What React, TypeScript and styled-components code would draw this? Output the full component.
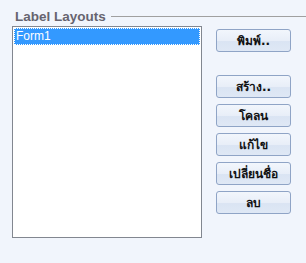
import React from "react";
import styled, { createGlobalStyle } from "styled-components";

const GlobalStyle = createGlobalStyle`
  html, body {
    margin: 0;
    padding: 0;
    background: #f1f5fc;
  }
  body {
    width: 306px;
    height: 263px;
    overflow: hidden;
    font-family: Tahoma, "DejaVu Sans", "Noto Sans", sans-serif;
  }
`;

const Panel = styled.div`
  width: 306px;
  height: 263px;
  box-sizing: border-box;
  padding-top: 6px;
`;

const Header = styled.div`
  display: flex;
  align-items: center;
  height: 20px;
  padding-left: 15px;
  gap: 5px;
`;

const Title = styled.span`
  font-family: "Liberation Sans", Arial, sans-serif;
  font-weight: bold;
  font-size: 13.5px;
  color: #66646f;
  white-space: nowrap;
`;

const Rule = styled.div`
  flex: 1;
  height: 1px;
  background: #a0a0a0;
`;

const Body = styled.div`
  display: flex;
  padding-left: 12px;
  gap: 14px;
`;

const ListBox = styled.div`
  width: 190px;
  height: 212px;
  box-sizing: border-box;
  border: 1px solid #828790;
  background: #ffffff;
  padding: 1px 0 0 1px;
`;

const ListItem = styled.div<{ $selected?: boolean }>`
  height: 17px;
  box-sizing: border-box;
  margin-right: 1px;
  padding-left: 1px;
  line-height: 15px;
  font-family: "Liberation Sans", Arial, sans-serif;
  font-size: 12px;
  color: ${(p) => (p.$selected ? "#ffffff" : "#000000")};
  background: ${(p) => (p.$selected ? "#3399ff" : "transparent")};
  border: 1px dotted ${(p) => (p.$selected ? "#ffffff" : "transparent")};
`;

const Buttons = styled.div`
  display: flex;
  flex-direction: column;
  gap: 6px;
  padding-top: 3px;
`;

const Button = styled.button<{ $spaced?: boolean }>`
  width: 75px;
  height: 23px;
  margin-bottom: ${(p) => (p.$spaced ? "17px" : "0")};
  box-sizing: border-box;
  border: 1px solid #8fa4c6;
  border-radius: 3px;
  background: linear-gradient(#f2f6fc 0%, #e8eef8 50%, #dae4f3 55%, #dfe8f5 100%);
  font-family: Tahoma, "DejaVu Sans", "Noto Sans", sans-serif;
  font-size: 12px;
  font-weight: bold;
  color: #111111;
  padding: 0;
  cursor: pointer;
`;

const actions = ["สร้าง..", "โคลน", "แก้ไข", "เปลี่ยนชื่อ", "ลบ"];

export default function App() {
  return (
    <>
      <GlobalStyle />
      <Panel>
        <Header>
          <Title>Label Layouts</Title>
          <Rule />
        </Header>
        <Body>
          <ListBox>
            <ListItem $selected>Form1</ListItem>
          </ListBox>
          <Buttons>
            <Button $spaced>พิมพ์..</Button>
            {actions.map((a) => (
              <Button key={a}>{a}</Button>
            ))}
          </Buttons>
        </Body>
      </Panel>
    </>
  );
}
